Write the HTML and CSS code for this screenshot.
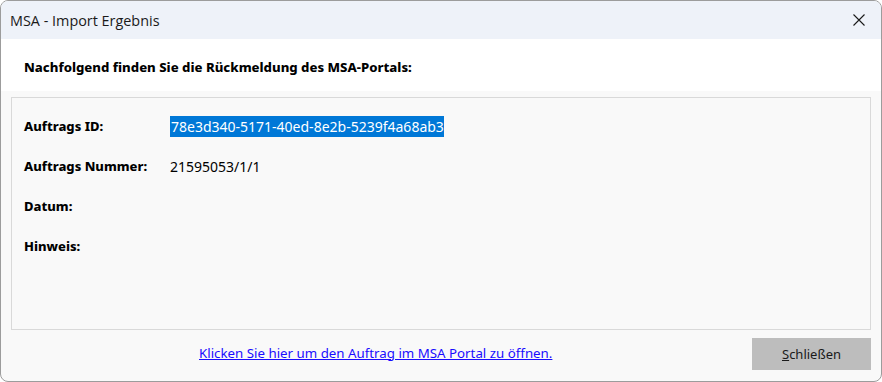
FILE: index.html
```html
<!DOCTYPE html>
<html lang="de">
<head>
    <meta charset="UTF-8">
    <title>MSA - Import Ergebnis</title>
    <link rel="stylesheet" href="styles.css">
</head>
<body>
    <div class="window">
        <!-- Title bar -->
        <div class="titlebar">
            <span class="title">MSA - Import Ergebnis</span>
            <span class="close">
                <svg width="12" height="12" viewBox="0 0 12 12">
                    <path d="M0.5 0.5 L11.5 11.5 M11.5 0.5 L0.5 11.5" stroke="#1a1a1a" stroke-width="1.1" fill="none"/>
                </svg>
            </span>
        </div>

        <div class="header">Nachfolgend finden Sie die Rückmeldung des MSA-Portals:</div>

        <div class="content">
            <div class="panel">
                <div class="row">
                    <span class="label">Auftrags ID:</span>
                    <span class="value"><span class="selected">78e3d340-5171-40ed-8e2b-5239f4a68ab3</span></span>
                </div>
                <div class="row">
                    <span class="label">Auftrags Nummer:</span>
                    <span class="value">21595053/1/1</span>
                </div>
                <div class="row">
                    <span class="label">Datum:</span>
                    <span class="value"></span>
                </div>
                <div class="row">
                    <span class="label">Hinweis:</span>
                    <span class="value"></span>
                </div>
            </div>

            <div class="footer">
                <a class="portal-link" href="#">Klicken Sie hier um den Auftrag im MSA Portal zu öffnen.</a>
                <button class="button"><u>S</u>chließen</button>
            </div>
        </div>
    </div>
</body>
</html>
```

FILE: styles.css
```css
html, body {
    margin: 0;
    padding: 0;
    background: #ffffff;
}

body {
    font-family: "Noto Sans", "Liberation Sans", sans-serif;
    color: #000;
}

.window {
    box-sizing: border-box;
    width: 882px;
    height: 382px;
    border: 1px solid #9c9c9c;
    border-radius: 8px;
    overflow: hidden;
    display: flex;
    flex-direction: column;
    background: #f9f9f9;
}

.titlebar {
    flex-shrink: 0;
    height: 38px;
    background: #eef2f9;
    display: flex;
    align-items: center;
    justify-content: space-between;
    padding: 0 16px 0 9px;
}

.title {
    font-family: "Open Sans", sans-serif;
    font-size: 14.4px;
    color: #1a1a1a;
}

.close {
    display: flex;
}

.header {
    flex-shrink: 0;
    box-sizing: border-box;
    height: 52px;
    background: #ffffff;
    display: flex;
    align-items: center;
    padding: 3px 0 0 23px;
    font-size: 13.15px;
    font-weight: 800;
}

.content {
    flex: 1;
    padding: 6px 10px 10px 10px;
    display: flex;
    flex-direction: column;
}

.panel {
    flex-shrink: 0;
    box-sizing: border-box;
    height: 233px;
    border: 1px solid #d9d9d9;
    padding: 19px 12px 0 12px;
    display: flex;
    flex-direction: column;
    gap: 22px;
}

.row {
    display: flex;
    align-items: center;
    height: 18px;
    font-size: 13px;
}

.label {
    width: 146px;
    font-weight: 800;
    font-size: 13px;
}

.value {
    font-size: 14px;
}

.selected {
    background: #0078d7;
    color: #ffffff;
    padding: 1px 0 1px 1px;
}

.footer {
    flex: 1;
    display: flex;
    align-items: center;
    justify-content: space-between;
    padding-left: 188px;
}

.portal-link {
    color: #1a0dff;
    font-size: 13.3px;
    margin-top: 4px;
}

.button {
    width: 119px;
    height: 32px;
    border: none;
    background: #bdbdbd;
    color: #1a1a1a;
    font-family: "Noto Sans", sans-serif;
    font-size: 13px;
    cursor: pointer;
    margin-right: 0;
    margin-top: 6px;
}
```
